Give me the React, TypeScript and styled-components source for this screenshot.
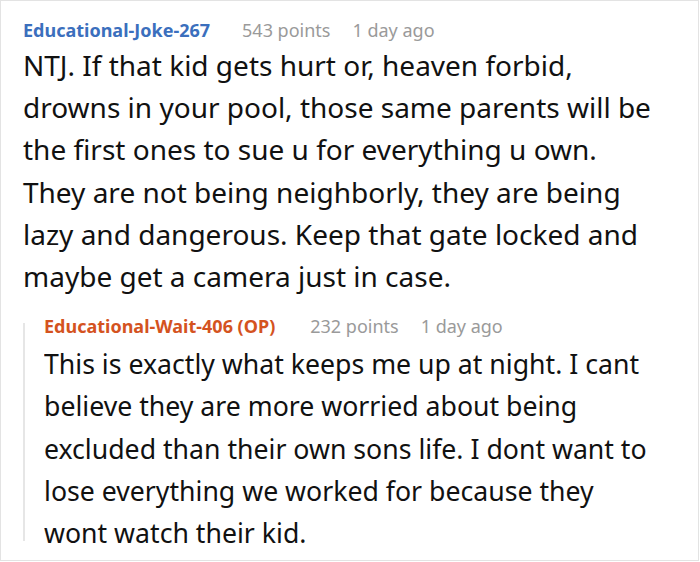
import React from "react";
import styled, { createGlobalStyle } from "styled-components";

const Global = createGlobalStyle`
  html, body { margin: 0; padding: 0; background: #ffffff; }
  body { font-family: "Noto Sans", "Open Sans", sans-serif; }
`;

const Frame = styled.div`
  box-sizing: border-box;
  width: 699px;
  height: 561px;
  border: 1px solid #e3e3e3;
  background: #fff;
  padding: 15px 0 0 22px;
  overflow: hidden;
`;

const Comment = styled.div<{ $nested?: boolean }>`
  position: relative;
  display: flex;
  flex-direction: column;
  padding-left: ${(p) => (p.$nested ? "21px" : "0")};
  margin-top: ${(p) => (p.$nested ? "15px" : "0")};
  &::before {
    content: "";
    display: ${(p) => (p.$nested ? "block" : "none")};
    position: absolute;
    left: 0;
    top: 11px;
    bottom: 12px;
    width: 2px;
    background: #e6e6e6;
  }
`;

const Meta = styled.div<{ $nested?: boolean }>`
  display: flex;
  align-items: baseline;
  gap: 22px;
  font-size: 18px;
  line-height: 28px;
  margin-bottom: ${(p) => (p.$nested ? "2px" : "0")};
`;

const Author = styled.span<{ $op?: boolean }>`
  font-weight: 700;
  color: ${(p) => (p.$op ? "#d4531f" : "#3b6fbd")};
  margin-right: ${(p) => (p.$op ? "13px" : "10px")};
`;

const Info = styled.span`
  color: #9a9a9a;
`;

const Body = styled.p<{ $narrow?: boolean }>`
  margin: 0;
  font-size: 28px;
  line-height: 42.2px;
  color: #111;
  white-space: nowrap;
  transform-origin: left top;
  transform: ${(p) => (p.$narrow ? "scaleX(0.952)" : "none")};
`;

export default function App() {
  return (
    <>
      <Global />
      <Frame>
        <Comment>
          <Meta>
            <Author>Educational-Joke-267</Author>
            <Info>543 points</Info>
            <Info>1 day ago</Info>
          </Meta>
          <Body>
            NTJ. If that kid gets hurt or, heaven forbid,
            <br />
            drowns in your pool, those same parents will be
            <br />
            the first ones to sue u for everything u own.
            <br />
            They are not being neighborly, they are being
            <br />
            lazy and dangerous. Keep that gate locked and
            <br />
            maybe get a camera just in case.
          </Body>
        </Comment>
        <Comment $nested>
          <Meta $nested>
            <Author $op>Educational-Wait-406 (OP)</Author>
            <Info>232 points</Info>
            <Info>1 day ago</Info>
          </Meta>
          <Body $narrow>
            This is exactly what keeps me up at night. I cant
            <br />
            believe they are more worried about being
            <br />
            excluded than their own sons life. I dont want to
            <br />
            lose everything we worked for because they
            <br />
            wont watch their kid.
          </Body>
        </Comment>
      </Frame>
    </>
  );
}
